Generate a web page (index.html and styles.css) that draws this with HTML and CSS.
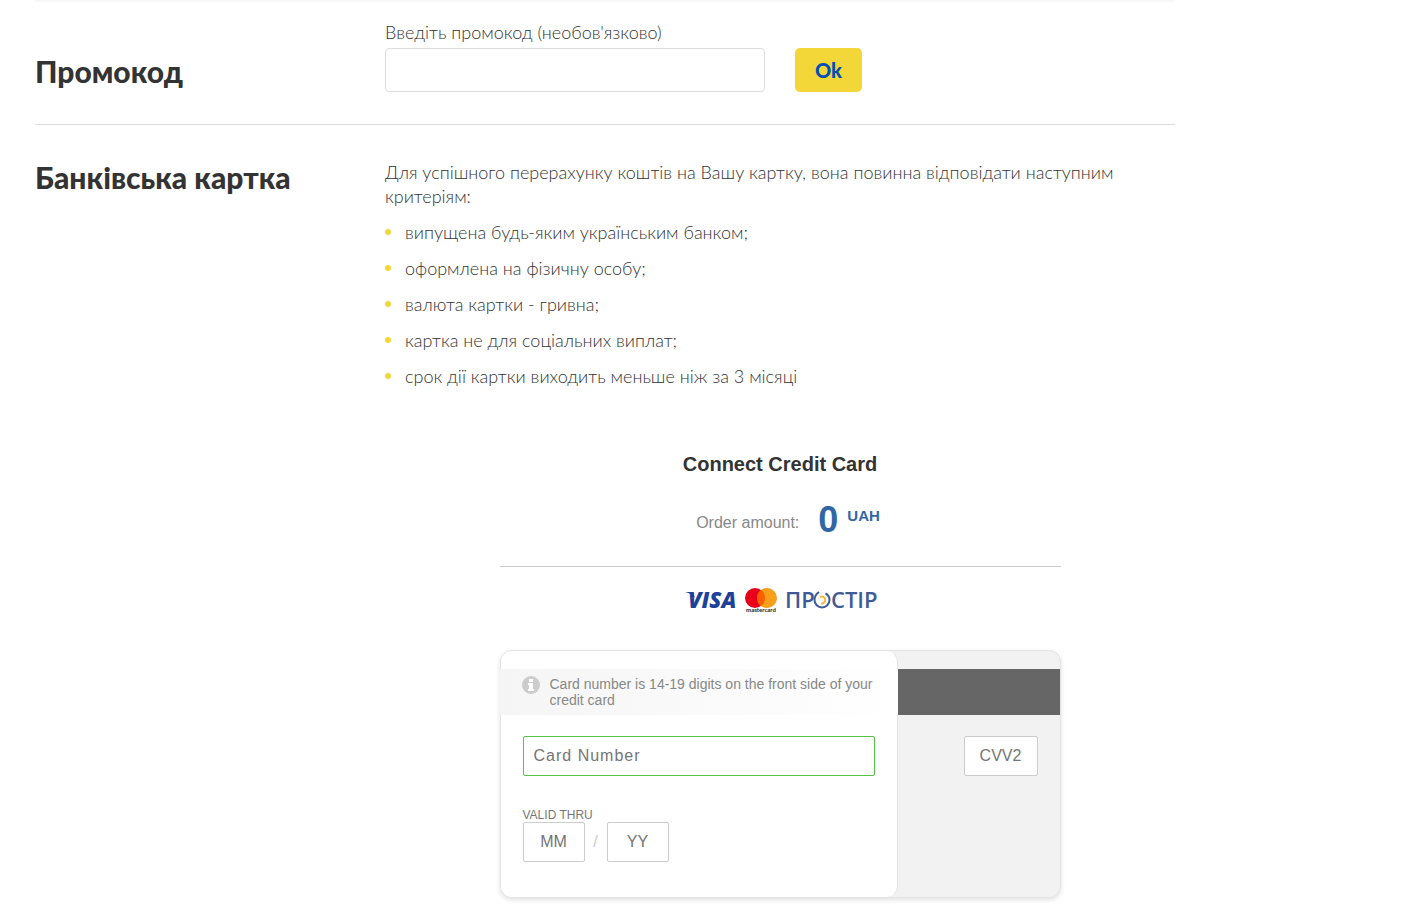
FILE: index.html
```
<!DOCTYPE html>
<html lang="uk">
<head>
  <meta charset="UTF-8">
  <meta name="viewport" content="width=device-width, initial-scale=1.0">
  <title>Банківська картка</title>
  <link rel="stylesheet" href="styles.css">
</head>
<body>
  <main class="page">
    <section class="row promo">
      <h2 class="row-title">Промокод</h2>
      <form class="promo-form">
        <div class="promo-field">
          <label for="promocode">Введіть промокод (необов'язково)</label>
          <input type="text" id="promocode" class="promo-input">
        </div>
        <button type="button" class="btn">Ok</button>
      </form>
    </section>

    <section class="row bank">
      <h2 class="row-title">Банківська картка</h2>
      <div class="row-body">
        <p class="intro">Для успішного перерахунку коштів на Вашу картку, вона повинна відповідати наступним критеріям:</p>
        <ul class="criteria">
          <li>випущена будь-яким українським банком;</li>
          <li>оформлена на фізичну особу;</li>
          <li>валюта картки - гривна;</li>
          <li>картка не для соціальних виплат;</li>
          <li>срок дії картки виходить меньше ніж за 3 місяці</li>
        </ul>

        <form class="pay">
          <h3 class="pay-title">Connect Credit Card</h3>
          <div class="amount">
            <span class="amount-label">Order amount:</span>
            <span class="amount-value">0</span>
            <span class="amount-currency">UAH</span>
          </div>

          <div class="brands">
            <!-- visa -->
            <svg width="53" height="36" viewBox="0 0 53 36" role="img" aria-label="Visa">
              <text class="visa" x="3" y="25">VISA</text>
              <path d="M0 9h8l2 6c-2-3-5-5-10-6z" fill="#1d419b"/>
            </svg>
            <!-- mastercard -->
            <svg width="34" height="36" viewBox="0 0 34 36" role="img" aria-label="Mastercard">
              <circle cx="11" cy="15" r="10" fill="#eb001b"/>
              <circle cx="23" cy="15" r="10" fill="#f79e1b"/>
              <path d="M17 7a10 10 0 0 1 0 16a10 10 0 0 1 0-16z" fill="#ff5f00"/>
              <text class="mastercard" x="17" y="29" text-anchor="middle">mastercard</text>
            </svg>
            <!-- prostir -->
            <svg width="96" height="36" viewBox="0 0 96 36" role="img" aria-label="Простір">
              <text class="prostir" x="1" y="25">ПР</text>
              <path d="M35 9c-3 2-4.500 5-4.500 8a7.500 7.500 0 0 0 15 0c0-3-1-5-4-6.500" fill="none" stroke="#3f5b96" stroke-width="2"/>
              <path d="M36 14a3.500 3.500 0 1 1 1 6.500" fill="none" stroke="#f6b83c" stroke-width="2"/>
              <text class="prostir" x="47" y="25">СТІР</text>
            </svg>
          </div>

          <div class="card">
            <div class="card-front">
              <p class="hint">
                <svg class="hint-icon" width="18" height="18" viewBox="0 0 18 18" aria-hidden="true">
                  <circle cx="9" cy="9" r="9" fill="#ccc"/>
                  <path d="M7 3h4v3H7zM6 7h5v6h1v2H6v-2h1V9H6z" fill="#fff"/>
                </svg>
                <span>Card number is 14-19 digits on the front side of your credit card</span>
              </p>
              <div class="card-fields">
                <input type="text" class="field field-number" placeholder="Card Number" aria-label="Card Number" autofocus>
                <fieldset class="valid">
                  <legend>VALID THRU</legend>
                  <div class="valid-fields">
                    <input type="text" class="field field-date" placeholder="MM" aria-label="Month">
                    <span class="slash">/</span>
                    <input type="text" class="field field-date" placeholder="YY" aria-label="Year">
                  </div>
                </fieldset>
              </div>
            </div>
            <div class="card-back">
              <div class="stripe"></div>
              <input type="text" class="field field-cvv" placeholder="CVV2" aria-label="CVV2">
            </div>
          </div>
        </form>
      </div>
    </section>
  </main>
</body>
</html>
```

FILE: styles.css
```
* {
  box-sizing: border-box;
}

body {
  margin: 0;
  background: #fff;
  color: #333;
  font-family: Lato, "Open Sans", sans-serif;
  font-size: 18px;
  font-weight: 300;
  line-height: 24px;
}

h2, h3, p, ul {
  margin: 0;
  padding: 0;
}

input, button {
  font: inherit;
  margin: 0;
}

.page {
  max-width: 1175px;
  padding: 0 0 20px 35px;
}

.row {
  display: grid;
  grid-template-columns: 350px 1fr;
}

.row-title {
  color: #333;
  font-size: 30px;
  font-weight: 900;
  line-height: 34px;
}

/* promo code */
.promo {
  padding: 20px 0 32px;
  border-bottom: 1px solid #ddd;
  background: linear-gradient(#f5f5f5, #fff 3px);
}

.promo .row-title {
  padding-top: 34px;
}

.promo-form {
  display: flex;
  align-items: flex-end;
  gap: 30px;
}

.promo-field {
  width: 380px;
}

.promo-field label {
  display: block;
  margin-bottom: 4px;
}

.promo-input {
  display: block;
  width: 100%;
  height: 44px;
  padding: 0 12px;
  border: 1px solid #ddd;
  border-radius: 4px;
}

.btn {
  height: 44px;
  padding: 0 20px;
  border: 0;
  border-radius: 5px;
  background: #f3d738;
  color: #0050b5;
  font-size: 20px;
  font-weight: 900;
}

/* bank card */
.bank {
  padding-top: 35px;
}

.intro {
  margin-bottom: 12px;
}

.criteria {
  list-style: none;
}

.criteria li {
  display: flex;
  align-items: center;
  gap: 14px;
  margin-bottom: 12px;
}

.criteria li::before {
  content: '';
  width: 6px;
  height: 6px;
  border-radius: 50%;
  background: #f3d738;
}

/* payment form */
.pay {
  max-width: 561px;
  margin: 64px auto 0;
  font-family: "Liberation Sans", Arial, sans-serif;
  font-size: 16px;
  font-weight: normal;
}

.pay-title {
  color: #333;
  font-size: 20px;
  font-weight: bold;
  text-align: center;
}

.amount {
  display: flex;
  justify-content: center;
  padding: 25px 0 27px 16px;
  border-bottom: 1px solid #ccc;
}

.amount-label {
  padding-top: 10px;
  margin-right: 19px;
  color: #888;
}

.amount-value {
  margin-right: 9px;
  color: #3166a5;
  font-size: 36px;
  font-weight: bold;
  line-height: 38px;
}

.amount-currency {
  padding-top: 3px;
  color: #3166a5;
  font-size: 15px;
  font-weight: bold;
}

.brands {
  display: flex;
  justify-content: center;
  gap: 6px;
  margin: 16px 0 31px;
  padding-left: 4px;
}

.visa {
  fill: #1d419b;
  font: italic 800 22px "Open Sans", sans-serif;
}

.mastercard {
  fill: #222;
  font: bold 6px Lato, sans-serif;
}

.prostir {
  fill: #3f5b96;
  font: 600 22px "Open Sans", sans-serif;
}

.card {
  display: grid;
  grid-template-columns: 397px 1fr;
  border: 1px solid #e4e4e4;
  border-radius: 12px;
  background: #f2f2f2;
  box-shadow: 0 2px 5px rgba(0, 0, 0, 0.12);
}

.card-front {
  padding-top: 18px;
  border-right: 1px solid #e4e4e4;
  border-radius: 11px;
  background: #fff;
}

.hint {
  display: flex;
  gap: 10px;
  margin: 0 -1px;
  padding: 7px 22px;
  background: linear-gradient(to right, #f5f5f5, #fff);
  color: #888;
  font-size: 14px;
  line-height: 16px;
}

.hint-icon {
  flex: none;
}

.card-fields {
  padding: 21px 22px 35px;
}

.field {
  display: block;
  height: 40px;
  border: 1px solid #ccc;
  border-radius: 2px;
  background: #fff;
  color: #333;
  outline: none;
}

.field::placeholder {
  color: #757575;
}

.field-number {
  width: 100%;
  padding: 0 10px;
  border: 1px solid #54c242;
  letter-spacing: 1px;
}

.valid {
  margin: 32px 0 0;
  padding: 0;
  border: 0;
}

.valid legend {
  padding: 0;
  color: #777;
  font-size: 12px;
  line-height: 14px;
}

.valid-fields {
  display: flex;
  align-items: center;
}

.field-date {
  width: 62px;
  text-align: center;
}

.slash {
  width: 22px;
  color: #ccc;
  text-align: center;
}

.card-back {
  padding-top: 18px;
}

.stripe {
  height: 46px;
  background: #666;
}

.field-cvv {
  width: 74px;
  margin: 21px 22px 0 auto;
  text-align: center;
}
```
